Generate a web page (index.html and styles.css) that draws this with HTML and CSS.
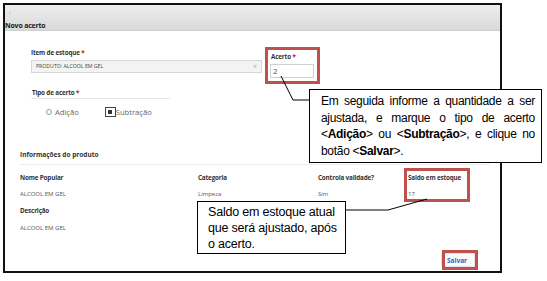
FILE: index.html
```html
<!DOCTYPE html>
<html>
<head>
    <title>Novo acerto</title>
    <link rel="stylesheet" href="styles.css">
</head>
<body>
    <div class="frame">
        <div class="header">
            <div class="crumb">›</div>
            <div class="title">Novo acerto</div>
        </div>

        <div class="content">
            <div class="form">
                <div class="row-top">
                    <div class="field-item">
                        <div class="label">Item de estoque <span class="req">*</span></div>
                        <div class="select">
                            <span>PRODUTO: ALCOOL EM GEL</span>
                            <span class="clear">×</span>
                        </div>
                    </div>
                    <div class="hl field-acerto">
                        <div class="label">Acerto <span class="req">*</span></div>
                        <div class="input">2</div>
                    </div>
                </div>

                <div class="label tipo">Tipo de acerto <span class="req">*</span></div>
                <div class="radios">
                    <span class="radio"></span><span class="opt">Adição</span>
                    <span class="check"><span></span></span><span class="opt">Subtração</span>
                </div>
            </div>

            <div class="info">
                <div class="section-title">Informações do produto</div>
                <div class="grid">
                    <div class="col">
                        <div class="label">Nome Popular</div>
                        <div class="value">ALCOOL EM GEL</div>
                    </div>
                    <div class="col">
                        <div class="label">Categoria</div>
                        <div class="value">Limpeza</div>
                    </div>
                    <div class="col">
                        <div class="label">Controla validade?</div>
                        <div class="value">Sim</div>
                    </div>
                    <div class="col">
                        <div class="hl saldo">
                            <div class="label">Saldo em estoque</div>
                            <div class="value">17</div>
                        </div>
                    </div>
                </div>
                <div class="desc">
                    <div class="label">Descrição</div>
                    <div class="value">ALCOOL EM GEL</div>
                </div>
            </div>
        </div>

        <div class="footer">
            <div class="hl save-box">
                <button class="btn-save">Salvar</button>
            </div>
        </div>
    </div>

    <!-- leader lines of the callouts -->
    <svg class="leaders" width="547" height="281">
        <polyline points="281,76 293,100 309,100" />
        <polyline points="346,210 388,210 427,199" />
    </svg>

    <div class="callout callout-main">
        Em seguida informe a quantidade a ser ajustada, e marque o tipo de acerto
        &lt;<b>Adição</b>&gt; ou &lt;<b>Subtração</b>&gt;, e clique no botão &lt;<b>Salvar</b>&gt;.
    </div>

    <div class="callout callout-saldo">
        Saldo em estoque atual<br>que será ajustado, após<br>o acerto.
    </div>
</body>
</html>
```

FILE: styles.css
```css
body {
    margin: 0;
    width: 547px;
    height: 281px;
    overflow: hidden;
    background: #fff;
    position: relative;
    font-family: "Open Sans", Arial, sans-serif;
}

.frame {
    box-sizing: border-box;
    margin: 3px 0 0 3px;
    width: 499px;
    height: 270px;
    border: 2px solid #111;
    display: flex;
    flex-direction: column;
}

.header {
    height: 26px;
    background: linear-gradient(#ededed, #dadada);
    border-bottom: 1px solid #cfcfcf;
    box-sizing: border-box;
}

.crumb {
    font-size: 6px;
    line-height: 8px;
    color: #999;
    padding: 3px 0 0 4px;
}

.title {
    font-size: 7px;
    font-weight: bold;
    line-height: 9px;
    color: #222;
    padding: 5px 0 0 0;
    letter-spacing: -0.2px;
}

.content {
    padding: 16px 0 0 15px;
}

.form {
    padding-left: 11px;
}

.label {
    font-size: 6.3px;
    line-height: 8px;
    font-weight: bold;
    color: #333;
    letter-spacing: -0.15px;
}

.req {
    color: #e00;
}

.row-top {
    display: flex;
    align-items: flex-start;
}

.field-item {
    width: 231px;
    margin-top: 2px;
    margin-right: 3px;
}

.field-item .label {
    margin-bottom: 3px;
}

.select {
    box-sizing: border-box;
    height: 13px;
    border: 1px solid #d6d6d6;
    background: #f3f3f3;
    font-size: 5.2px;
    line-height: 11px;
    color: #444;
    padding: 0 4px;
    display: flex;
    justify-content: space-between;
}

.clear {
    color: #aaa;
    font-size: 7px;
}

.hl {
    border: 3px solid #c0504d;
    box-sizing: border-box;
}

.field-acerto {
    width: 55px;
    padding: 3px 3px 3px 2px;
}

.field-acerto .label {
    padding-left: 1px;
    margin-bottom: 3px;
}

.input {
    box-sizing: border-box;
    height: 14px;
    border: 1px solid #d0d0d0;
    font-size: 8px;
    line-height: 12px;
    color: #555;
    padding-left: 2px;
}

.tipo {
    margin-top: 5px;
    width: 138px;
    padding-left: 1px;
    padding-bottom: 1px;
    border-bottom: 1px solid #e6e6e6;
}

.radios {
    margin-top: 7px;
    display: flex;
    align-items: center;
    height: 12px;
    padding-left: 15px;
}

.radio {
    width: 4px;
    height: 4px;
    border: 1px solid #999;
    border-radius: 50%;
    margin-right: 3px;
}

.opt {
    font-size: 7.6px;
    color: #666;
}

.opt:nth-of-type(2) {
    margin-right: 26px;
}

.check {
    box-sizing: border-box;
    width: 11px;
    height: 10px;
    border: 1px solid #444;
    display: flex;
    align-items: center;
    justify-content: center;
    margin-right: 0;
}

.check span {
    width: 4px;
    height: 4px;
    background: #333;
}

.info {
    margin-top: 33px;
}

.section-title {
    font-size: 6.5px;
    font-weight: bold;
    line-height: 8px;
    color: #333;
    width: 470px;
    padding-bottom: 5px;
    border-bottom: 1px solid #ececec;
}

.grid {
    display: grid;
    grid-template-columns: 178px 120px 90px 80px;
    margin-top: 9px;
}

.col .label {
    margin-bottom: 8px;
}

.value {
    font-size: 6px;
    line-height: 8px;
    color: #555;
}

.saldo {
    width: 66px;
    margin: -6px 0 -4px -4px;
    padding: 3px 0 1px 1px;
}

.desc {
    margin-top: 9px;
}

.desc .label {
    margin-bottom: 9px;
}

.footer {
    margin-top: auto;
    display: flex;
    justify-content: flex-end;
    padding-right: 22px;
}

.save-box {
    width: 36px;
    height: 20px;
    margin-bottom: 1px;
    display: flex;
}

.btn-save {
    margin: 0 0 0 -4px;
    padding: 0 0 0 5px;
    width: 37px;
    border: 1px solid #e4e4e4;
    background: #fafafa;
    font-family: "Open Sans", Arial, sans-serif;
    font-size: 6.5px;
    font-weight: bold;
    color: #2a68b8;
    text-align: left;
    position: relative;
    z-index: -1;
}

.leaders {
    position: absolute;
    left: 0;
    top: 0;
}

.leaders polyline {
    fill: none;
    stroke: #000;
    stroke-width: 1;
}

.callout {
    position: absolute;
    box-sizing: border-box;
    background: #fff;
    border: 1px solid #000;
    font-family: "Liberation Sans", Arial, sans-serif;
    font-size: 12px;
    color: #000;
}

.callout-main {
    left: 309px;
    top: 89px;
    width: 233px;
    height: 74px;
    padding: 3px 6px 0 11px;
    line-height: 16.6px;
    text-align: justify;
    letter-spacing: -0.3px;
}

.callout-saldo {
    left: 197px;
    top: 201px;
    width: 149px;
    height: 53px;
    padding: 2px 0 0 10px;
    line-height: 16px;
    font-size: 12.5px;
    letter-spacing: -0.2px;
}
```
